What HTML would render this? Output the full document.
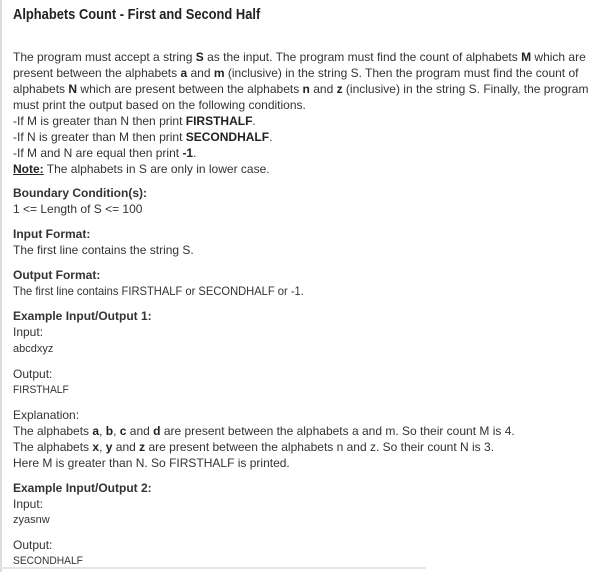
<!DOCTYPE html>
<html><head><meta charset="utf-8"><style>
body{margin:0;width:599px;height:572px;background:#fff;position:relative;overflow:hidden;font-family:"Liberation Sans",sans-serif;color:#333;}
.l{position:absolute;left:13px;font-size:12px;line-height:16px;white-space:nowrap;letter-spacing:0;transform-origin:0 0;}
.h{font-weight:bold;}
.s{font-size:11px;}
b{font-weight:bold;color:#222}
#bar{position:absolute;left:0;top:0;width:2px;height:572px;background:#ddd}
#bot{position:absolute;left:0;top:567px;width:426px;height:2px;background:#e6e6e6}
</style></head><body>
<div id="bar"></div>
<div class="l" style="top:5px;font-size:15px;line-height:20px;font-weight:bold;color:#222;transform:scaleX(0.86)">Alphabets Count - First and Second Half</div>
<div class="l" style="top:49px">The program must accept a string <b>S</b> as the input. The program must find the count of alphabets <b>M</b> which are</div>
<div class="l" style="top:65px">present between the alphabets <b>a</b> and <b>m</b> (inclusive) in the string S. Then the program must find the count of</div>
<div class="l" style="top:81px">alphabets <b>N</b> which are present between the alphabets <b>n</b> and <b>z</b> (inclusive) in the string S. Finally, the program</div>
<div class="l" style="top:97px">must print the output based on the following conditions.</div>
<div class="l" style="top:113px">-If M is greater than N then print <b>FIRSTHALF</b>.</div>
<div class="l" style="top:129px">-If N is greater than M then print <b>SECONDHALF</b>.</div>
<div class="l" style="top:145px">-If M and N are equal then print <b>-1</b>.</div>
<div class="l" style="top:161px"><b><u>Note:</u></b> The alphabets in S are only in lower case.</div>
<div class="l h" style="top:185px">Boundary Condition(s):</div>
<div class="l" style="top:201px">1 &lt;= Length of S &lt;= 100</div>
<div class="l h" style="top:226px">Input Format:</div>
<div class="l" style="top:242px">The first line contains the string S.</div>
<div class="l h" style="top:267px">Output Format:</div>
<div class="l" style="top:283px;transform:scaleX(0.93)">The first line contains FIRSTHALF or SECONDHALF or -1.</div>
<div class="l h" style="top:308px">Example Input/Output 1:</div>
<div class="l" style="top:324px">Input:</div>
<div class="l s" style="top:341px">abcdxyz</div>
<div class="l" style="top:366px">Output:</div>
<div class="l s" style="top:382px;transform:scaleX(0.93)">FIRSTHALF</div>
<div class="l" style="top:407px">Explanation:</div>
<div class="l" style="top:423px">The alphabets <b>a</b>, <b>b</b>, <b>c</b> and <b>d</b> are present between the alphabets a and m. So their count M is 4.</div>
<div class="l" style="top:439px">The alphabets <b>x</b>, <b>y</b> and <b>z</b> are present between the alphabets n and z. So their count N is 3.</div>
<div class="l" style="top:455px">Here M is greater than N. So FIRSTHALF is printed.</div>
<div class="l h" style="top:480px">Example Input/Output 2:</div>
<div class="l" style="top:496px">Input:</div>
<div class="l s" style="top:512px">zyasnw</div>
<div class="l" style="top:537px">Output:</div>
<div class="l s" style="top:553px;transform:scaleX(0.93)">SECONDHALF</div>
<div id="bot"></div>
</body></html>
